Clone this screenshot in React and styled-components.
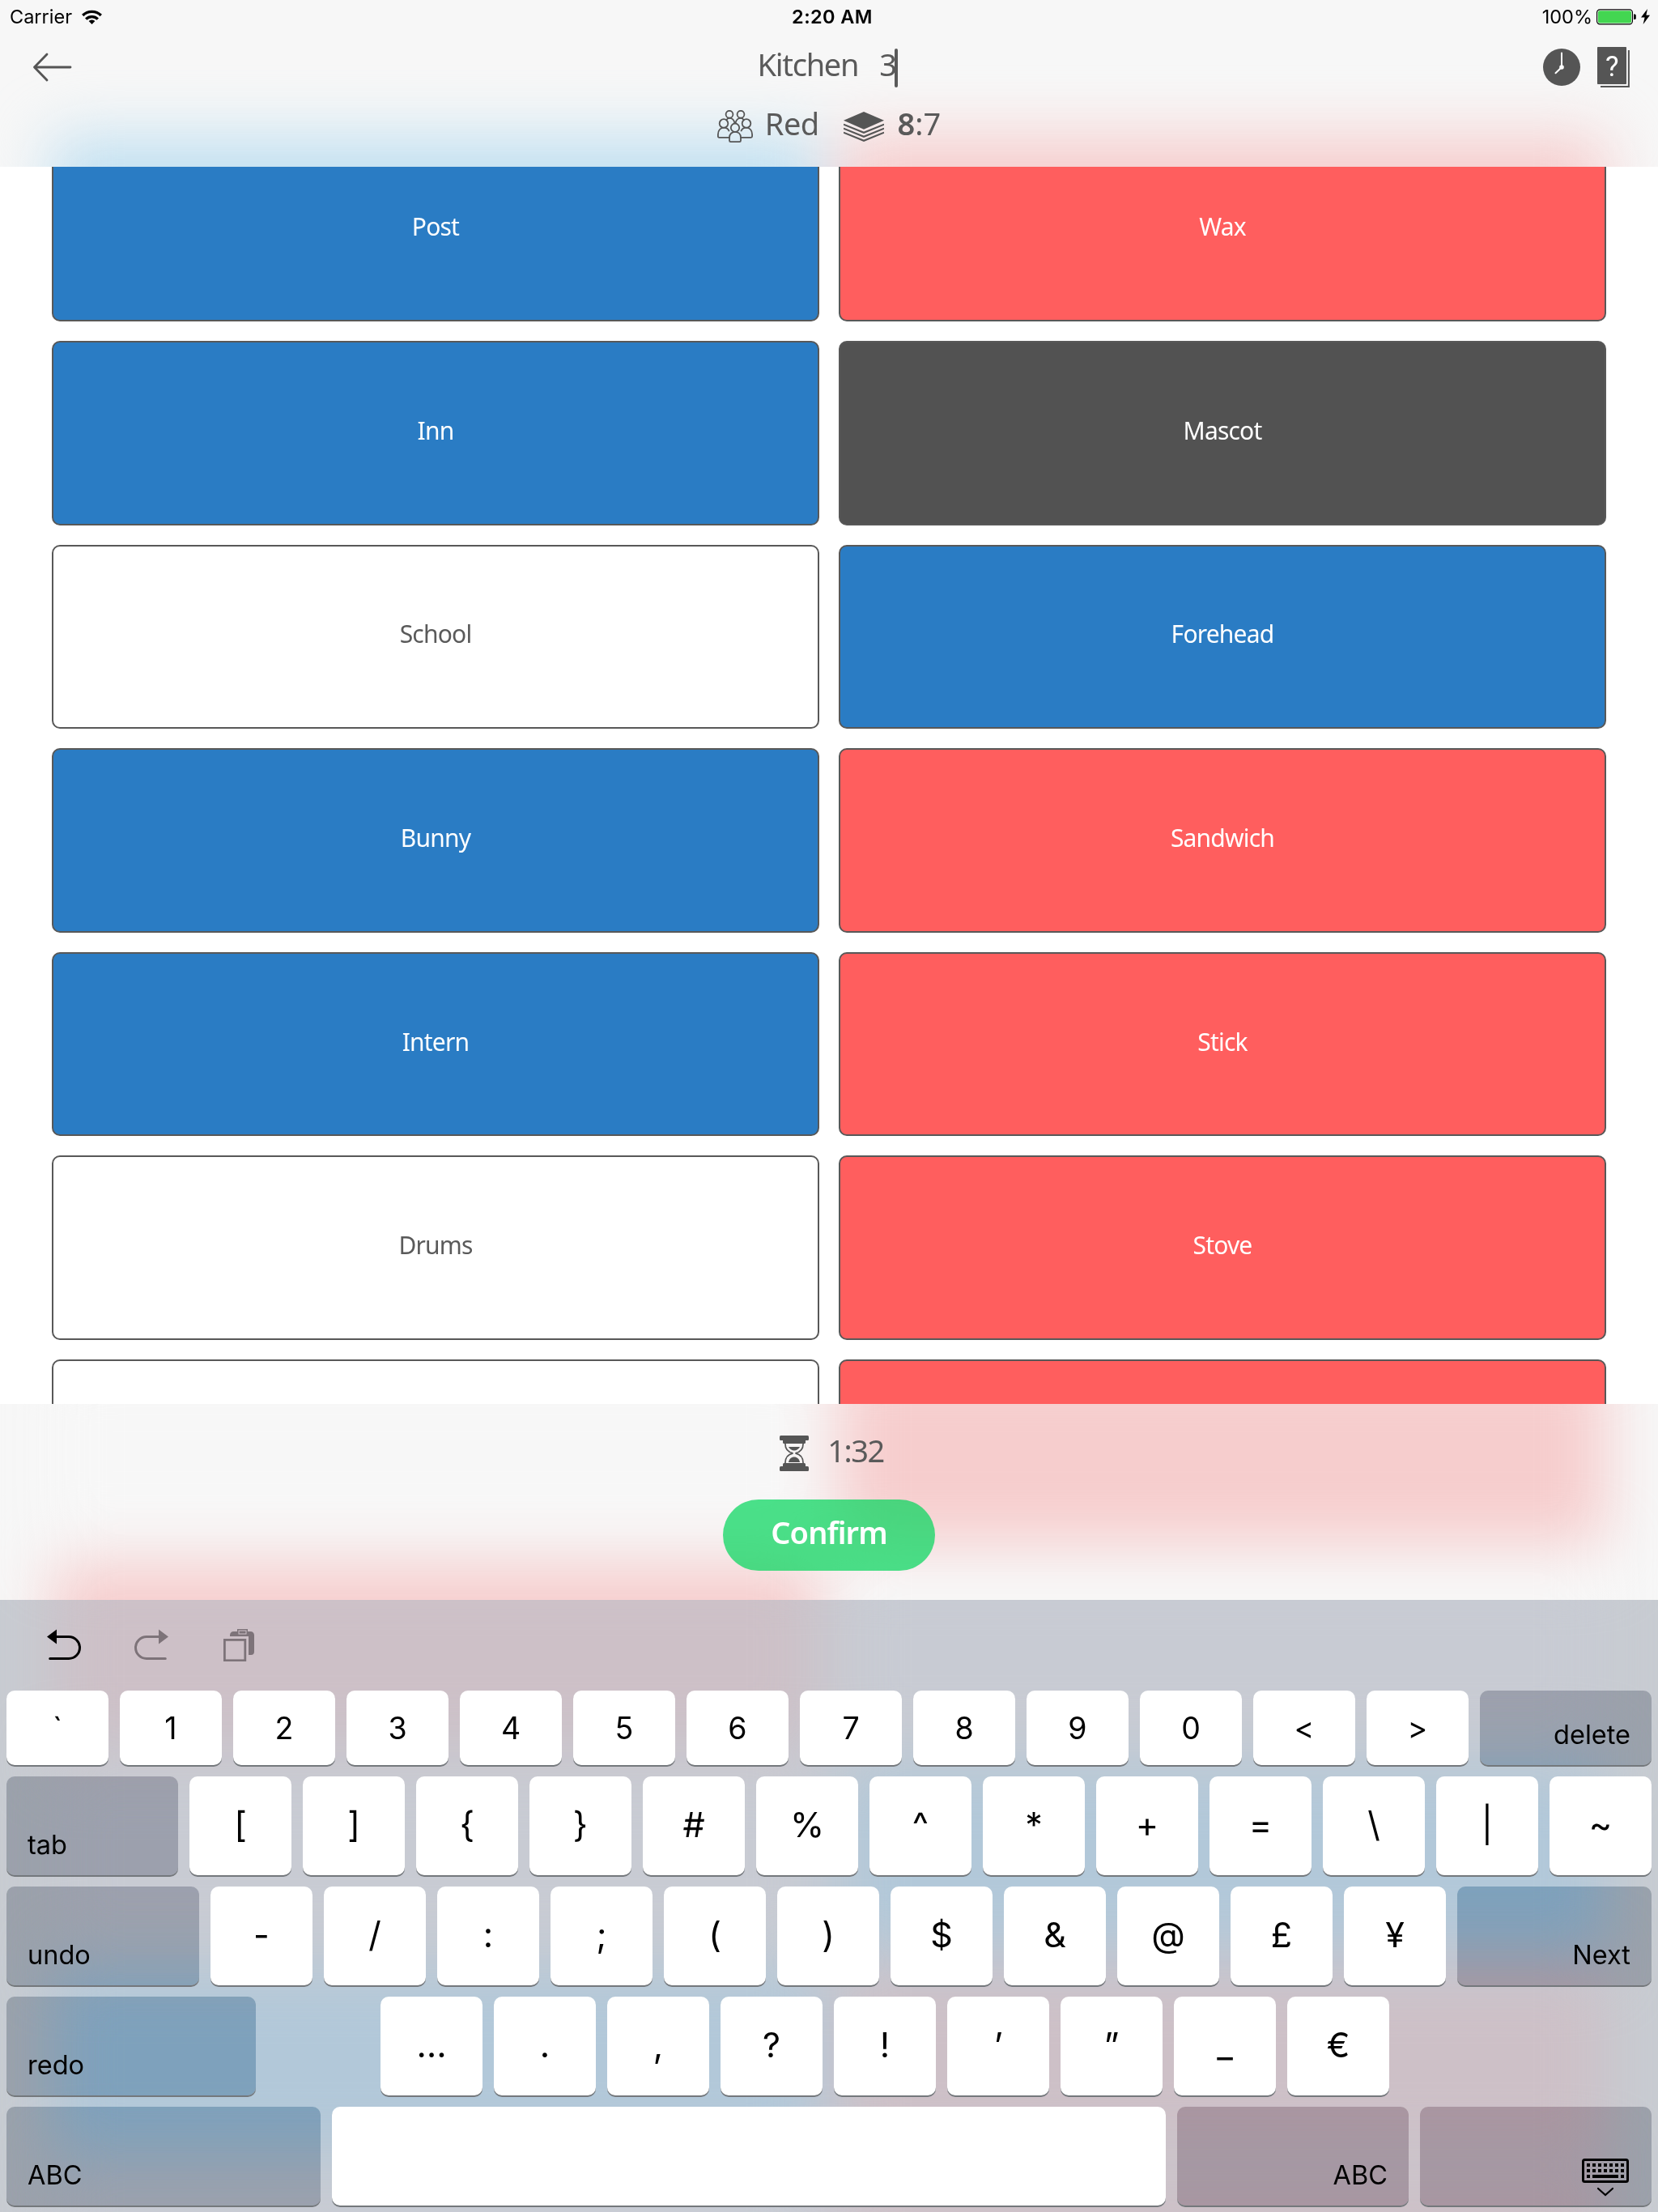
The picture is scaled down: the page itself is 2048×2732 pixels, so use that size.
import React from "react";
import styled, { createGlobalStyle, css } from "styled-components";

const ink = "#555555";

const GlobalStyle = createGlobalStyle`
  * { box-sizing: border-box; }
  body { margin: 0; background: #fff; }
  svg { display: block; flex: none; }
`;

const Screen = styled.div`
  position: relative;
  display: flex;
  flex-direction: column;
  width: 2048px;
  height: 2732px;
  overflow: hidden;
  background: #fff;
  color: #5a5a5a;
  font-family: "Noto Sans", "Open Sans", sans-serif;
`;

/* ---------- translucent bar backdrop ---------- */

const BackdropClip = styled.div`
  position: absolute;
  inset: 0;
  overflow: hidden;
  background: ${(p) => p.$base};
`;

const BackdropTiles = styled.div`
  display: grid;
  grid-template-columns: 948px 948px;
  grid-auto-rows: 227.6px;
  gap: 24px;
  margin: ${(p) => p.$top}px 64px 0;
  filter: blur(37px);
`;

const BackdropTile = styled.div`
  background: ${(p) => p.$color};
`;

const lightTint = { base: "#f7f7f7", white: "#f7f7f7", red: "#f6cdcd", blue: "#c1e0f1" };
const greyTint = { base: "#c8ccd2", white: "#c8cbd3", red: "#cdc0c7", blue: "#b2c8d9" };

function Backdrop({ tint, top, tiles }) {
  return (
    <BackdropClip $base={tint.base}>
      <BackdropTiles $top={top}>
        {tiles.map((t, i) => (
          <BackdropTile key={i} $color={tint[t]} />
        ))}
      </BackdropTiles>
    </BackdropClip>
  );
}

/* ---------- header ---------- */

const Header = styled.header`
  position: relative;
  flex: none;
  height: 206px;
`;

const HeaderContent = styled.div`
  position: relative;
  display: flex;
  flex-direction: column;
`;

const StatusBar = styled.div`
  display: grid;
  grid-template-columns: 1fr auto 1fr;
  align-items: center;
  height: 41px;
  padding: 0 10px 0 12px;
  color: #000;
  font: 400 23.5px/40px Inter, "Liberation Sans", sans-serif;
`;

const StatusGroup = styled.div`
  display: flex;
  align-items: center;
  gap: ${(p) => p.$gap}px;
  justify-content: ${(p) => (p.$end ? "flex-end" : "flex-start")};
`;

const Clock = styled.div`
  font-weight: 600;
  letter-spacing: 0.4px;
  padding-left: 6px;
`;

const NavRow = styled.div`
  display: grid;
  grid-template-columns: 1fr auto 1fr;
  align-items: center;
  height: 84px;
  padding: 0 34px 0 40px;
`;

const Clue = styled.div`
  display: flex;
  align-items: center;
  font-size: 38px;
  line-height: 48px;
  padding-bottom: 9px;
  margin-right: 9px;
`;

const ClueWord = styled.span`
  margin-right: 26px;
  letter-spacing: -1.3px;
`;

const ClueCount = styled.span`
  letter-spacing: -2.5px;
`;

const Caret = styled.span`
  width: 4px;
  height: 48px;
  margin-top: 9px;
  margin-bottom: -1px;
  border-radius: 2px;
  background: #5a5a5a;
`;

const NavActions = styled.div`
  display: flex;
  justify-content: flex-end;
  align-items: center;
  gap: 21px;
`;

const InfoRow = styled.div`
  display: flex;
  align-items: center;
  justify-content: center;
  height: 62px;
  font-size: 38px;
  line-height: 48px;
`;

const InfoText = styled.span`
  margin: -9px ${(p) => p.$after || 0}px 0 ${(p) => p.$before}px;
  letter-spacing: ${(p) => p.$track || 0}px;
  b { font-weight: 600; }
`;

/* ---------- board ---------- */

const Board = styled.main`
  flex: none;
  height: 1528px;
  overflow: hidden;
`;

const Tiles = styled.div`
  display: grid;
  grid-template-columns: 948px 948px;
  grid-auto-rows: 227.6px;
  gap: 24px;
  margin: -36.6px 64px 0;
`;

const tileColors = {
  blue: css`background: #2a7cc4; color: #fff;`,
  red: css`background: #ff5e5e; color: #fff;`,
  black: css`background: #525252; color: #fff;`,
  white: css`background: #fff; color: #5a5a5a;`,
};

const Tile = styled.div`
  display: flex;
  align-items: center;
  justify-content: center;
  padding-bottom: 6px;
  border: 2px solid #585858;
  border-radius: 10px;
  font-size: 30px;
  line-height: 40px;
  letter-spacing: -0.8px;
  ${(p) => tileColors[p.$kind]}
`;

/* ---------- footer ---------- */

const Footer = styled.footer`
  position: relative;
  flex: none;
  height: 242px;
`;

const FooterContent = styled.div`
  position: relative;
  display: flex;
  flex-direction: column;
  align-items: center;
  padding-top: 30px;
`;

const Timer = styled.div`
  display: flex;
  align-items: center;
  height: 62px;
  font-size: 38px;
  line-height: 48px;
  padding-left: 7px;
`;

const ConfirmButton = styled.button`
  width: 262px;
  height: 88px;
  margin: 26px 0 0;
  padding: 0 0 9px;
  border: 0;
  border-radius: 44px;
  background: rgba(0, 213, 90, 0.7);
  color: #fff;
  font: 600 38px/48px "Noto Sans", "Open Sans", sans-serif;
  letter-spacing: -0.9px;
`;

/* ---------- keyboard ---------- */

const Keyboard = styled.section`
  position: relative;
  flex: none;
  height: 756px;
`;

const KeyboardContent = styled.div`
  position: relative;
  color: #000;
  font-family: Inter, "Liberation Sans", sans-serif;
`;

const Toolbar = styled.div`
  display: flex;
  align-items: flex-start;
  height: 112px;
  padding: 36px 0 0 58px;
`;

const ToolIcon = styled.div`
  margin-right: ${(p) => p.$after || 0}px;
  color: ${(p) => (p.$muted ? "#7d7379" : "#000")};
`;

const KeyRows = styled.div`
  display: flex;
  flex-direction: column;
  gap: 14px;
  padding: 0 8px;
`;

const KeyRow = styled.div`
  display: flex;
  gap: 14px;
  height: ${(p) => (p.$short ? 92 : 122)}px;
  padding: 0;
  font-size: ${(p) => (p.$short ? 37.5 : 43)}px;
  line-height: ${(p) => (p.$short ? 94 : 119)}px;
`;

const Key = styled.div`
  flex: none;
  width: ${(p) => p.$w || 126}px;
  border-radius: 10px;
  background: #fff;
  box-shadow: 0 2px 0 #74787c;
  text-align: center;
`;

const ControlKey = styled.div`
  display: flex;
  align-items: flex-end;
  justify-content: ${(p) => (p.$end ? "flex-end" : "flex-start")};
  flex: none;
  width: ${(p) => p.$w}px;
  padding: 0 26px 17px;
  border-radius: 10px;
  backdrop-filter: saturate(2) brightness(0.79);
  box-shadow: 0 2px 0 #74787c;
  font-size: 32.5px;
  line-height: 40px;
`;

const DismissKey = styled(ControlKey)`
  padding-right: 27px;
  padding-bottom: 11px;
`;

const KeySpacer = styled.div`
  width: ${(p) => p.$w}px;
`;

/* ---------- icons ---------- */

const WifiIcon = () => (
  <svg width="25" height="18" viewBox="0 0 25 18" fill="none" stroke="#000" strokeWidth="3.4">
    <path d="M1.2 7a16 16 0 0 1 22.6 0" />
    <path d="M5.2 11.600a10.400 10.400 0 0 1 14.600 0" />
    <path d="M12.500 18l-3.900-4a5.600 5.600 0 0 1 7.800 0z" fill="#000" stroke="none" />
  </svg>
);

const BatteryIcon = () => (
  <svg width="50" height="20" viewBox="0 0 50 20">
    <rect x="0.6" y="0.8" width="43.8" height="18" rx="3.6" fill="#fff" stroke="#000" strokeWidth="1.2" />
    <rect x="2" y="2.2" width="41" height="15.2" rx="2" fill="#43d651" />
    <path d="M46 6.5h1.2a1.6 1.6 0 0 1 1.6 1.6v3.4a1.6 1.6 0 0 1-1.6 1.6H46z" fill="#000" />
  </svg>
);

const BoltIcon = () => (
  <svg width="11" height="19" viewBox="0 0 11 19">
    <path d="M8 0L0 10.6h4.6L2.6 19 11 7.8H6.4z" fill="#000" />
  </svg>
);

const BackIcon = () => (
  <svg width="50" height="36" viewBox="0 0 50 36" fill="none" stroke={ink} strokeWidth="2.8" strokeLinecap="round" strokeLinejoin="round">
    <path d="M47 18H2.5M18 2L2.5 18L18 34" transform="translate(0 0)" />
  </svg>
);

const HistoryIcon = () => (
  <svg width="46" height="46" viewBox="0 0 46 46" fill="none" stroke="#fff" strokeLinecap="round">
    <circle cx="23" cy="23" r="23" fill={ink} stroke="none" />
    <path d="M23 5.5V23L15.5 30.3" strokeWidth="2" />
    <circle cx="23" cy="23" r="2.8" fill="#fff" stroke="none" />
  </svg>
);

const RulesIcon = () => (
  <svg width="41" height="51" viewBox="0 0 41 51">
    <rect x="0" y="0" width="36" height="46" rx="0.8" fill={ink} />
    <path d="M38.9 4v44.9H4" fill="none" stroke={ink} strokeWidth="2" />
    <text x="18.2" y="35.5" textAnchor="middle" fill="#fff" fontFamily="Roboto, sans-serif" fontSize="35">?</text>
  </svg>
);

const TeamIcon = () => (
  <svg width="44" height="40" viewBox="0 0 44 40" fill="none" stroke={ink} strokeWidth="1.8" strokeLinejoin="round">
    <circle cx="15" cy="5.2" r="4.4" />
    <circle cx="29" cy="5.2" r="4.4" />
    <path d="M11 12.4c1-1.6 2.4-2.5 4-2.5 3.4 0 5.6 2 6.500 6.200" />
    <path d="M33 12.4c-1-1.6-2.4-2.5-4-2.5-3.4 0-5.600 2-6.500 6.200" />
    <circle cx="8" cy="16.500" r="5.300" />
    <circle cx="36" cy="16.500" r="5.300" />
    <path d="M15 33.800H2.400C1.400 33.800 0.900 33.300 0.900 32.300V30c0-5 3-8.300 7.100-8.300 3.200 0 5.600 1.500 6.700 4.500" />
    <path d="M29 33.800h12.600c1 0 1.500-.5 1.500-1.500V30c0-5-3-8.300-7.100-8.300-3.200 0-5.600 1.500-6.700 4.500" />
    <circle cx="22" cy="21.700" r="5.200" />
    <path d="M15 37.500V34c0-4.500 3-7.100 7-7.100s7 2.600 7 7.100v3.500c0 1-.5 1.600-1.500 1.600h-11c-1 0-1.500-.6-1.500-1.600z" />
  </svg>
);

const DeckIcon = () => (
  <svg width="50" height="37" viewBox="0 0 50 37" fill="none" stroke={ink} strokeWidth="2">
    <path d="M25 0L50 10.800 25 21.800 0 10.800z" fill={ink} stroke="none" />
    <path d="M0 15.600l25 10.200 25-10.200M0 20.600l25 10.200 25-10.200M0 25.600l25 10.200 25-10.200" />
  </svg>
);

const HourglassIcon = () => (
  <svg width="36" height="44" viewBox="0 0 36 44" fill={ink}>
    <rect x="0" y="0" width="36" height="6" rx="1.500" />
    <path d="M4 5h28v3.500a1.500 1.500 0 0 1-1.500 1.500h-25A1.500 1.500 0 0 1 4 8.500z" />
    <rect x="0" y="38" width="36" height="6" rx="1.500" />
    <path d="M4 39h28v-3.500a1.500 1.500 0 0 0-1.500-1.500h-25A1.500 1.500 0 0 0 4 35.500z" />
    <path d="M6.900 10c0 7 3 10.400 9.600 11.800-6.600 1.400-9.600 5-9.600 12.200M29.100 10c0 7-3 10.400-9.600 11.800 6.600 1.400 9.600 5 9.600 12.200" fill="none" stroke={ink} strokeWidth="1.700" />
    <path d="M11 14h14c-1.800 3-4 4.400-7 4.400S12.800 17 11 14z" />
    <path d="M11 33c.8-4 3.400-6.400 7-6.400s6.200 2.400 7 6.400z" />
  </svg>
);

const UndoIcon = ({ flip }) => (
  <svg width="42" height="40" viewBox="0 0 42 40">
    <g transform={flip ? "translate(42 0) scale(-1 1)" : undefined}>
      <path d="M0 9.500L12 0.600V18.400z" fill="currentColor" />
      <path d="M10 9.500H27a13.500 13.500 0 0 1 0 27H3.700" fill="none" stroke="currentColor" strokeWidth="3" strokeLinecap="round" />
    </g>
  </svg>
);

const PasteIcon = () => (
  <svg width="38" height="40" viewBox="0 0 38 40">
    <rect x="1.400" y="13.400" width="25.400" height="25.400" fill="none" stroke="currentColor" strokeWidth="2.800" />
    <path d="M8 9V7.500A4.500 4.500 0 0 1 12.500 3h21A4.500 4.500 0 0 1 38 7.500V28a4 4 0 0 1-4 4h-3V9z" fill="currentColor" />
    <rect x="17" y="0" width="13" height="8" fill="currentColor" />
    <rect x="19" y="2" width="9" height="4" fill="#7d7379" stroke="#cdc0c7" strokeWidth="1" />
  </svg>
);

const DismissIcon = () => (
  <svg width="59" height="47" viewBox="0 0 59 47">
    <rect x="1.500" y="1.500" width="55" height="27" rx="2" fill="none" stroke="#000" strokeWidth="3" />
    {[0, 1, 2, 3, 4, 5, 6].map((i) => (
      <g key={i}>
        <rect x={6 + i * 7} y="6" width="4" height="4" />
        <rect x={6 + i * 7} y="13" width="4" height="4" />
      </g>
    ))}
    <rect x="6" y="20" width="4" height="4" />
    <rect x="13" y="20" width="32" height="4" />
    <rect x="48" y="20" width="4" height="4" />
    <path d="M20 37l9 8 9-8" fill="none" stroke="#000" strokeWidth="2.200" strokeLinecap="round" />
  </svg>
);

/* ---------- data ---------- */

const tiles = [
  ["Post", "blue"], ["Wax", "red"],
  ["Inn", "blue"], ["Mascot", "black"],
  ["School", "white"], ["Forehead", "blue"],
  ["Bunny", "blue"], ["Sandwich", "red"],
  ["Intern", "blue"], ["Stick", "red"],
  ["Drums", "white"], ["Stove", "red"],
  ["", "white"], ["", "red"],
];

const keys = (list) => list.map((k) => <Key key={k}>{k}</Key>);

export default function App() {
  return (
    <Screen>
      <GlobalStyle />
      <Header>
        <Backdrop tint={lightTint} top={169.4} tiles={["blue", "red"]} />
        <HeaderContent>
          <StatusBar>
            <StatusGroup $gap={12}>
              <span>Carrier</span>
              <WifiIcon />
            </StatusGroup>
            <Clock>2:20 AM</Clock>
            <StatusGroup $gap={5} $end>
              <span>100%</span>
              <BatteryIcon />
              <BoltIcon />
            </StatusGroup>
          </StatusBar>
          <NavRow>
            <BackIcon />
            <Clue>
              <ClueWord>Kitchen</ClueWord>
              <ClueCount>3</ClueCount>
              <Caret />
            </Clue>
            <NavActions>
              <HistoryIcon />
              <RulesIcon />
            </NavActions>
          </NavRow>
          <InfoRow>
            <TeamIcon />
            <InfoText $before={15} $after={31} $track={-0.6}>Red</InfoText>
            <DeckIcon />
            <InfoText $before={16}><b>8</b>:7</InfoText>
          </InfoRow>
        </HeaderContent>
      </Header>

      <Board>
        <Tiles>
          {tiles.map(([word, kind], i) => (
            <Tile key={i} $kind={kind}>{word}</Tile>
          ))}
        </Tiles>
      </Board>

      <Footer>
        <Backdrop
          tint={lightTint}
          top={-55}
          tiles={["white", "red", "red", "white", "white", "white"]}
        />
        <FooterContent>
          <Timer>
            <HourglassIcon />
            <InfoText $before={23} $track={-1.5}>1:32</InfoText>
          </Timer>
          <ConfirmButton>Confirm</ConfirmButton>
        </FooterContent>
      </Footer>

      <Keyboard>
        <Backdrop
          tint={greyTint}
          top={-45}
          tiles={["red", "white", "white", "blue", "blue", "red", "white", "red"]}
        />
        <KeyboardContent>
          <Toolbar>
            <ToolIcon $after={66}><UndoIcon /></ToolIcon>
            <ToolIcon $after={68} $muted><UndoIcon flip /></ToolIcon>
            <ToolIcon $muted><PasteIcon /></ToolIcon>
          </Toolbar>
          <KeyRows>
            <KeyRow $short>
              {keys(["`", "1", "2", "3", "4", "5", "6", "7", "8", "9", "0", "<", ">"])}
              <ControlKey $w={212} $end>delete</ControlKey>
            </KeyRow>
            <KeyRow>
              <ControlKey $w={212}>tab</ControlKey>
              {keys(["[", "]", "{", "}", "#", "%", "^", "*", "+", "=", "\\", "|", "~"])}
            </KeyRow>
            <KeyRow>
              <ControlKey $w={238}>undo</ControlKey>
              {keys(["-", "/", ":", ";", "(", ")", "$", "&", "@", "£", "¥"])}
              <ControlKey $w={240} $end>Next</ControlKey>
            </KeyRow>
            <KeyRow>
              <ControlKey $w={308}>redo</ControlKey>
              <KeySpacer $w={126} />
              {keys(["…", ".", ",", "?", "!", "’", "”", "_", "€"])}
            </KeyRow>
            <KeyRow>
              <ControlKey $w={388}>ABC</ControlKey>
              <Key $w={1030} />
              <ControlKey $w={286} $end>ABC</ControlKey>
              <DismissKey $w={286} $end><DismissIcon /></DismissKey>
            </KeyRow>
          </KeyRows>
        </KeyboardContent>
      </Keyboard>
    </Screen>
  );
}
